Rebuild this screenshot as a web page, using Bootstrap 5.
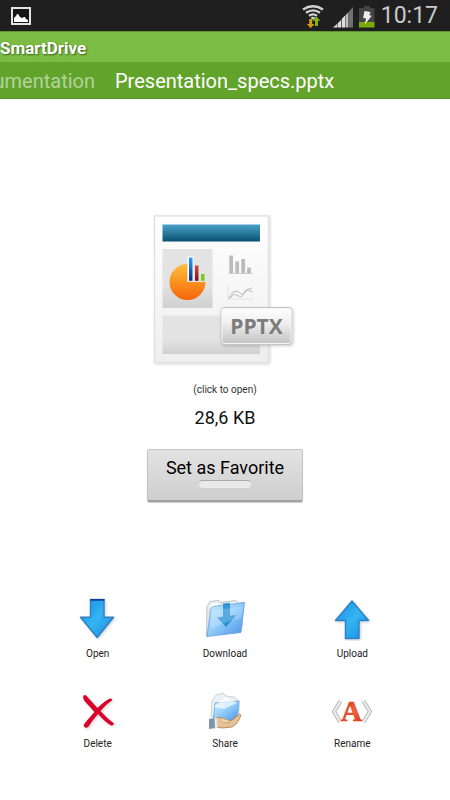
<!DOCTYPE html>
<html lang="en">
<head>
<meta charset="utf-8">
<meta name="viewport" content="width=device-width, initial-scale=1">
<title>SmartDrive</title>
<link href="https://cdn.jsdelivr.net/npm/bootstrap@5.3.0/dist/css/bootstrap.min.css" rel="stylesheet">
<style>
body{font-family:Roboto,"Liberation Sans",sans-serif;color:#111;background:#fff}
svg{display:block}
.status-bar{background:#1f1f1f;height:31px;padding:0 12px 0 10px}
.clock{font-size:23px;line-height:32px;color:#cacaca}
.app-bar{background:#7cbc45;border-top:1px solid #619337;height:31px}
.app-bar h1{font-size:17px;line-height:32px;font-weight:700;color:#fff;text-shadow:1px 1px 2px #365f18}
.crumbs{background:#62a32c;border-bottom:1px solid #579624;height:37px;font-size:20px;line-height:38px;gap:20px}
.crumb-clip{width:95px;direction:rtl}
.crumb-clip a{color:#b3d39a;direction:ltr}
.crumb-now{color:#fff}
.preview{padding-top:111px}
.hint{font-size:10px;line-height:16px;color:#333;margin-top:12px}
.size{font-size:18px;line-height:24px;margin-top:8px}
.fav{width:156px;height:53px;margin-top:19px;padding:8px 0 0;border:1px solid #c4c4c4;border-bottom:2px solid #a0a0a0;border-radius:2px;background:linear-gradient(#e3e3e3,#cecece);font-size:18px;line-height:20px;color:#000;box-shadow:0 1px 1px #ccc}
.fav-light{width:54px;height:9px;border-radius:5px;background:#e9e9e9;border:1px solid #d0d0d0;border-top-color:#aaa;margin-top:2px}
.actions{padding:95px 34px 0}
.action{height:90px;font-size:10px;line-height:14px;color:#222}
.action svg{margin-bottom:6px}
</style>
<script src="https://cdn.jsdelivr.net/npm/bootstrap@5.3.0/dist/js/bootstrap.bundle.min.js"></script>
</head>
<body>
<div class="status-bar d-flex align-items-center justify-content-between">
  <svg width="22" height="20" viewBox="10 6 22 20" role="img" aria-label="Picture saved"><path d="M12 8h18v16H12z" fill="#161616" stroke="#e4e4e4" stroke-width="2"/><path d="M14 22v-4l2-2 1-2h1l2 3 2 1 2-1h1l1 2 2 1v2z" fill="#fff"/></svg>
  <div class="d-flex align-items-center">
    <svg width="82" height="30" viewBox="301 1 82 30" role="img" aria-label="Wi-Fi, signal and battery">
      <g fill="none" stroke="#d2d2d2" stroke-width="2.3"><path d="M305 9.500Q315 3 325 9.500"/><path d="M308 12.800Q315 8 322 12.800"/><path d="M311 15.800Q315 13 319 15.800"/></g><path d="M312.500 17.500q2.500-1.500 5 0L315 20z" fill="#d2d2d2"/>
      <path d="M311.200 19h3v5h2.300l-3.800 4.200-3.800-4.200h2.300z" fill="#d59a10"/><path d="M318.500 16.500l3.800 4.300H320V26h-3v-5.200h-2.300z" fill="#82b510"/>
      <path d="M335 27.500L339 24v3.500zM339.500 23.500l3.500-3.500v7.500h-3.500zM343.700 19l3.800-4v12.500h-3.800z" fill="#ddd"/><path d="M348 14.500l2.500-2.500v15.500H348z" fill="#bbb"/><path d="M351 11.500L355 7v20.500h-4z" fill="#707070"/>
      <path d="M361 8h5V6h6v2h4.500v14H361z" fill="#444"/><path d="M361 22h15.500v5.500H361z" fill="#7aaa0a"/><path d="M366.500 11l6 1-1.200 3.200 2.500.5-7 8.800 1.300-6-3-.5z" fill="#eee"/>
    </svg>
    <span class="clock">10:17</span>
  </div>
</div>
<header class="app-bar"><h1 class="m-0">SmartDrive</h1></header>
<nav class="crumbs d-flex text-nowrap" aria-label="Folder path">
  <div class="crumb-clip overflow-hidden"><a href="#" class="text-decoration-none">Documentation</a></div>
  <span class="crumb-now" aria-current="page">Presentation_specs.pptx</span>
</nav>
<main>
  <section class="preview d-flex flex-column align-items-center">
    <a href="#" aria-label="Open Presentation_specs.pptx">
    <svg width="150" height="160" viewBox="150 210 150 160">
      <defs>
        <linearGradient id="paper" x2="0" y2="1"><stop stop-color="#fff"/><stop offset="1" stop-color="#eee"/></linearGradient>
        <linearGradient id="teal" x2="0" y2="1"><stop stop-color="#4aa3ca"/><stop offset="1" stop-color="#07516e"/></linearGradient>
        <linearGradient id="panel" x2="0" y2="1"><stop offset=".6" stop-color="#e3e3e3"/><stop offset="1" stop-color="#d0d0d0"/></linearGradient>
        <linearGradient id="pie" x2="0" y2="1"><stop stop-color="#fbc03a"/><stop offset="1" stop-color="#f86408"/></linearGradient>
        <linearGradient id="tag" x2="0" y2="1"><stop stop-color="#fff"/><stop offset=".4" stop-color="#f1eff0"/><stop offset="1" stop-color="#c2c2c2"/></linearGradient>
        <linearGradient id="b1" x2="0" y2="1"><stop stop-color="#2da0ff"/><stop offset="1" stop-color="#062f80"/></linearGradient>
        <linearGradient id="b2" x2="0" y2="1"><stop stop-color="#d64c48"/><stop offset="1" stop-color="#7d1010"/></linearGradient>
        <filter id="soft" x="-10%" y="-10%" width="120%" height="130%"><feDropShadow dx="1" dy="1" stdDeviation="1.500" flood-opacity=".2"/></filter>
      </defs>
      <rect x="154.500" y="216" width="114" height="146.500" fill="url(#paper)" stroke="#dedede" stroke-width="1.200" filter="url(#soft)"/>
      <rect x="162.500" y="224.500" width="97.500" height="17" fill="url(#teal)"/>
      <rect x="162.500" y="249" width="50" height="59" fill="url(#panel)"/>
      <rect x="162.500" y="315.500" width="97.500" height="38.500" fill="url(#panel)"/>
      <path d="M187.500 264v18h18a18 18 0 1 1-18-18z" fill="url(#pie)"/>
      <path d="M187.500 256h6v25h-6z" fill="#fff" opacity=".8"/><path d="M189 257.500h3.500v23.300H189z" fill="url(#b1)"/><path d="M195 265.500h3.500v15.300H195z" fill="url(#b2)"/><path d="M201 274h3.500v6.800H201z" fill="#73c91f"/>
      <path d="M231.200 255.500v18M237.200 261.500v12M243.200 259v14.500M249 267.500v6" stroke="#bbb" stroke-width="3.700"/><path d="M228.500 273.500h24" stroke="#ccc"/>
      <path d="M228 285v14h25" fill="none" stroke="#e2e2e2"/><path d="M229 298l4-6 4-1 6 4 4-5 6 2M229 299l5-5 7 3 5-7 6-2" fill="none" stroke="#b5b5b5" stroke-width=".9"/>
      <rect x="221" y="307.500" width="71" height="37" rx="3" fill="url(#tag)" stroke="#c5c5c5" filter="url(#soft)"/><rect x="222" y="308.500" width="69" height="35" rx="2" fill="none" stroke="#f4f4f4"/>
      <text x="256.500" y="334" text-anchor="middle" font-family="Open Sans,sans-serif" font-weight="700" font-size="21" fill="#7c7c7c">PPTX</text>
    </svg></a>
    <div class="hint">(click to open)</div>
    <div class="size">28,6 KB</div>
    <button type="button" class="fav d-flex flex-column align-items-center">Set as Favorite<span class="fav-light"></span></button>
  </section>
  <section class="actions row g-0 text-center" aria-label="File actions">
    <button type="button" class="action col-4 border-0 bg-transparent p-0 d-flex flex-column align-items-center">
      <svg width="44" height="44" viewBox="76 598 44 44"><defs><linearGradient id="blue" x2="1" y2="1"><stop stop-color="#128be0"/><stop offset=".5" stop-color="#35b4f2"/><stop offset="1" stop-color="#1689dd"/></linearGradient></defs><path d="M90.500 600.800h13.500v17.500h9.500L97.200 638.500 80.500 618.300h10z" fill="url(#blue)" stroke="#3180c4" stroke-width="1.500" stroke-linejoin="round" filter="url(#soft)"/><path d="M90 600.800h14.500" stroke="#07419b" stroke-width="1.800"/></svg>Open
    </button>
    <button type="button" class="action col-4 border-0 bg-transparent p-0 d-flex flex-column align-items-center">
      <svg width="44" height="44" viewBox="203 598 44 44"><defs><linearGradient id="fold" x2="1" y2="1"><stop stop-color="#d5f1ff"/><stop offset=".5" stop-color="#8ccafa"/><stop offset="1" stop-color="#4c8de2"/></linearGradient></defs>
      <path d="M206.500 637.500l.5-30 3-5 9-1 2 2 15-2 3 3 4-1-1 24z" fill="#e7ebef" stroke="#bcc4cc"/><path d="M211 605l6-2 2 3 18-3v10l-27 2z" fill="#fafcfe"/>
      <path d="M213.500 607.500q-2.500.5-3 3.500l-3.500 26.500 34-4 3.500-30z" fill="url(#fold)" stroke="#6a9edb" stroke-width=".8"/><path d="M223 604.500l7-.8v13l6.500-.8-10.500 12-9-9.500 6-.7z" fill="#1686cf" opacity=".8"/><path d="M212 612l31-5-2 12q-15 3-30 11z" fill="#fff" opacity=".2"/></svg>Download
    </button>
    <button type="button" class="action col-4 border-0 bg-transparent p-0 d-flex flex-column align-items-center">
      <svg width="44" height="44" viewBox="330 598 44 44"><path d="M352 602l16.500 19.500H359v18h-13.500v-18h-10z" fill="url(#blue)" stroke="#3180c4" stroke-width="1.500" stroke-linejoin="round" filter="url(#soft)"/></svg>Upload
    </button>
    <button type="button" class="action col-4 border-0 bg-transparent p-0 d-flex flex-column align-items-center">
      <svg width="44" height="44" viewBox="76 687 44 44"><path d="M83.500 695.500q2-1.500 3.500 1l10.500 11.500q7-7 12.500-9.500 2.500 0 2 2-5 3-11.500 10.500 6 7 13.500 12.500-.5 2.500-3 2-6-3.500-13-11.500-6 7-9.500 12.500-2.500 2.500-4.500 0-1-2 1-3.500 4-5 9.500-11-4.500-5-10-11-2-3.500-1-5.500z" fill="#d9052b" filter="url(#soft)"/></svg>Delete
    </button>
    <button type="button" class="action col-4 border-0 bg-transparent p-0 d-flex flex-column align-items-center">
      <svg width="44" height="44" viewBox="203 688 44 44"><path d="M211 718l1-16 4-6 7-2 3 3 8 1 5 4v16z" fill="#edf1f4" stroke="#c2c9d0" stroke-width=".8"/><path d="M215 704l24-2-2 20-24 1z" fill="url(#fold)" stroke="#64a9e2" stroke-width=".8"/><path d="M214 708l11-10 12 6-13 6z" fill="#fff" opacity=".65"/>
      <path d="M215 719q5-2 9 1l5 2q5-1 8-5 3-3 4-1-3 9-9 12-10 2-17 0z" fill="#e5c293" stroke="#ac8053" stroke-width=".8"/><path d="M222 723l7 1q2-2-1-3l-6-2" fill="#f2d5ae" stroke="#b88c5a" stroke-width=".6"/><path d="M209 720l6-1 1 10-7 1z" fill="#8194ae"/><path d="M214.500 718.500l2.500.5.500 10-2.500 1z" fill="#e6ebf2"/></svg>Share
    </button>
    <button type="button" class="action col-4 border-0 bg-transparent p-0 d-flex flex-column align-items-center">
      <svg width="44" height="44" viewBox="330 688 44 44"><defs><linearGradient id="red" x2="1" y2="1"><stop stop-color="#d32208"/><stop offset=".6" stop-color="#f0643c"/><stop offset="1" stop-color="#d32a0c"/></linearGradient></defs><g fill="none" stroke-linejoin="round"><path d="M340.500 702l-6.500 10.500 6 10.500M363.500 702l6.500 10.500-6.500 10.500" stroke="#b5b5b5" stroke-width="4"/><path d="M340.500 702l-6.500 10.500 6 10.500M363.500 702l6.500 10.500-6.500 10.500" stroke="#ececec" stroke-width="2.300"/></g><text x="351.500" y="721.500" text-anchor="middle" font-family="Liberation Serif,serif" font-weight="700" font-size="29" fill="url(#red)" stroke="#d83b1c" stroke-width=".6">A</text></svg>Rename
    </button>
  </section>
</main>
</body>
</html>
